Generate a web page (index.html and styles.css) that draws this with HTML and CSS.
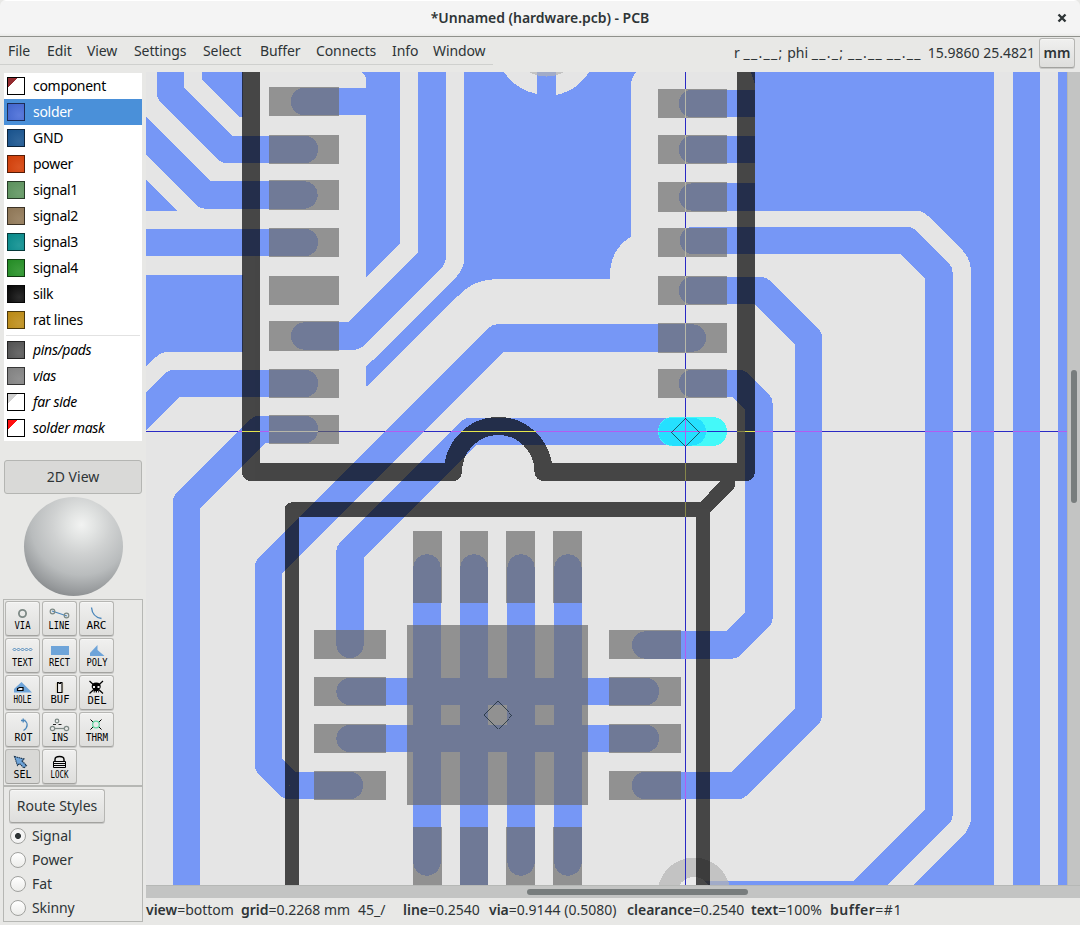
FILE: index.html
```html
<!DOCTYPE html>
<html lang="en">
<head>
<meta charset="utf-8">
<title>*Unnamed (hardware.pcb) - PCB</title>
<link rel="stylesheet" href="styles.css">
</head>
<body>
<div class="window">
<header class="titlebar"><h1>*Unnamed (hardware.pcb) - PCB</h1>
<svg class="close" width="10" height="10" viewBox="0 0 10 10"><path d="M1.5 1.5L8.5 8.5M8.5 1.5L1.5 8.5"/></svg></header>
<div class="topbar">
<nav class="menu"><span>File</span><span>Edit</span><span>View</span><span>Settings</span><span>Select</span><span>Buffer</span><span>Connects</span><span>Info</span><span>Window</span></nav>
<div class="coords"><span class="rel">r <i>__.__;</i> phi <i>__._;</i> <i>__.__</i> <i>__.__</i></span><span class="abs">15.9860 25.4821</span><button class="btn unit">mm</button></div>
</div>
<div class="main">
<aside class="side">
<ul class="layers">
<li><i class="sw half maroon"></i>component</li>
<li class="sel"><i class="sw c-solder"></i>solder</li>
<li><i class="sw c-gnd"></i>GND</li>
<li><i class="sw c-power"></i>power</li>
<li><i class="sw c-s1"></i>signal1</li>
<li><i class="sw c-s2"></i>signal2</li>
<li><i class="sw c-s3"></i>signal3</li>
<li><i class="sw c-s4"></i>signal4</li>
<li><i class="sw c-silk"></i>silk</li>
<li><i class="sw c-rat"></i>rat lines</li>
<li class="sep"></li>
<li class="it"><i class="sw c-pins"></i>pins/pads</li>
<li class="it"><i class="sw c-vias"></i>vias</li>
<li class="it"><i class="sw half grey"></i>far side</li>
<li class="it"><i class="sw half red"></i>solder mask</li>
</ul>
<button class="btn view2d">2D View</button>
<div class="ball"></div>
<div class="tools">
<button class="btn"><svg viewBox="0 0 33 33"><circle cx="16.5" cy="11.5" r="3.6" fill="none" stroke="#7d8985" stroke-width="1.8"/><text x="8.500" y="26.500" textLength="16" lengthAdjust="spacingAndGlyphs">VIA</text></svg></button>
<button class="btn"><svg viewBox="0 0 33 33"><path d="M9 9L24 14" stroke="#4a86bb" stroke-width="1.3"/><g fill="none" stroke="#7d8985" stroke-width="1.2"><circle cx="9.500" cy="9.500" r="2.300"/><circle cx="23.500" cy="13.500" r="2.300"/></g><text x="5.500" y="26.500" textLength="21" lengthAdjust="spacingAndGlyphs">LINE</text></svg></button>
<button class="btn"><svg viewBox="0 0 33 33"><path d="M11.500 5.500C12 11 15 15.500 21.500 16.500" fill="none" stroke="#4a86bb" stroke-width="1.3"/><text x="6.500" y="26.500" textLength="20" lengthAdjust="spacingAndGlyphs">ARC</text></svg></button>
<button class="btn"><svg viewBox="0 0 33 33"><g fill="none" stroke="#4a86bb"><path d="M7 10.500l1.500-1.500 1.500 1.500-1.500 1.500zM11 10.500l1.500-1.500 1.500 1.500-1.500 1.500zM15 10.500l1.500-1.500 1.500 1.500-1.500 1.500zM19 10.500l1.500-1.500 1.500 1.500-1.500 1.500zM23 10.500l1.500-1.500 1.500 1.500-1.500 1.500z" stroke-width="1"/></g><text x="6" y="26.500" textLength="21" lengthAdjust="spacingAndGlyphs">TEXT</text></svg></button>
<button class="btn"><svg viewBox="0 0 33 33"><path d="M8 7h18v9H8z" fill="#6ea4d9"/><text x="6" y="26.500" textLength="21" lengthAdjust="spacingAndGlyphs">RECT</text></svg></button>
<button class="btn"><svg viewBox="0 0 33 33"><path d="M17.500 6v5l7 6H10v-3z" fill="#6ea4d9"/><text x="6.500" y="26.500" textLength="21" lengthAdjust="spacingAndGlyphs">POLY</text></svg></button>
<button class="btn"><svg viewBox="0 0 33 33"><path d="M15.500 6L26 16.500H8V13z" fill="#6ea4d9"/><path d="M13.500 11.500h3.500v3h-5.500v-2z" fill="#eee" stroke="#000" stroke-width="1.200"/><text x="7.500" y="26.500" textLength="18" lengthAdjust="spacingAndGlyphs">HOLE</text></svg></button>
<button class="btn"><svg viewBox="0 0 33 33"><path d="M12.500 8h8M12.500 10h8M12.500 12h8M12.500 14h8M12.500 16h8" stroke="#d8c9a4" stroke-width="1"/><path d="M14.500 6.500h1.500v1h1.500v-1h1.500v10h-4.500z" fill="#eee" stroke="#000" stroke-width="1.100"/><text x="7.500" y="26.500" textLength="19" lengthAdjust="spacingAndGlyphs">BUF</text></svg></button>
<button class="btn"><svg viewBox="0 0 33 33"><path d="M9.500 5L23 17.500M23 5L9.500 17.500" stroke="#000" stroke-width="1.200"/><path d="M16.200 6.500c3 0 4.500 1.500 4.500 4 0 2-1 2.500-2 3v3h-5v-3c-1-.5-2-1-2-3 0-2.500 1.500-4 4.500-4z"/><path d="M13 10h2v2h-2zM17.500 10h2v2h-2zM14.700 15h1v2h-1zM17 15h1v2h-1z" fill="#eee"/><text x="7.500" y="27.500" textLength="19" lengthAdjust="spacingAndGlyphs">DEL</text></svg></button>
<button class="btn"><svg viewBox="0 0 33 33"><path d="M18 7c4 2.500 4.500 7.500-.5 10.500M15 7.500h4.500M17.200 5.500v4" fill="none" stroke="#4a86bb" stroke-width="1.300"/><text x="8.500" y="27.500" textLength="18" lengthAdjust="spacingAndGlyphs">ROT</text></svg></button>
<button class="btn"><svg viewBox="0 0 33 33"><g fill="none" stroke="#7d8985" stroke-width="1.200"><circle cx="14" cy="8" r="1.800"/><circle cx="9.500" cy="15.500" r="2.200"/><circle cx="23.500" cy="15.500" r="2.200"/><path d="M12 15.500h9"/></g><path d="M10 11.500h3M15.500 11.500h3" stroke="#222"/><text x="8.500" y="27.500" textLength="17" lengthAdjust="spacingAndGlyphs">INS</text></svg></button>
<button class="btn"><svg viewBox="0 0 33 33"><path d="M10.500 6.500l3 3M21.500 6.500l-3 3M10.500 16.500l3-3M21.500 16.500l-3-3" stroke="#000"/><circle cx="16" cy="11.500" r="3.300" fill="none" stroke="#64d6a3" stroke-width="1.300"/><text x="6" y="27.500" textLength="22" lengthAdjust="spacingAndGlyphs">THRM</text></svg></button>
<button class="btn on"><svg viewBox="0 0 33 33"><path d="M8.500 6.500l9.500 2.500-2 2 4.500 4.500-2.500 2.500-4.500-4.500-2 2z" fill="#6ea4d9" stroke="#1b3550" stroke-width="1.100" stroke-dasharray="1.500 .6"/><text x="7.500" y="27.500" textLength="18" lengthAdjust="spacingAndGlyphs">SEL</text></svg></button>
<button class="btn"><svg viewBox="0 0 33 33"><path d="M12 12V9.500c0-4 9-4 9 0V12" fill="none" stroke="#000" stroke-width="1.400"/><path d="M10.500 11.500h12v6h-12zM10.500 13.500h12M10.500 15.500h12" fill="#eee" stroke="#000" stroke-width="1"/><text x="7.500" y="27.500" textLength="18" lengthAdjust="spacingAndGlyphs">LOCK</text></svg></button>
</div>
<div class="routes">
<button class="btn rs">Route Styles</button>
<label><i class="radio on"></i>Signal</label>
<label><i class="radio"></i>Power</label>
<label><i class="radio"></i>Fat</label>
<label><i class="radio"></i>Skinny</label>
</div>
</aside>
<section class="work">
<div class="row">
<svg class="board" viewBox="146 72 921 813">
<g class="copper">
<path d="M202 72H243V117H239L202 80zM146 180L177 211H146zM146 275H243V352H168Q161 352 156 357L146 366z"/>
<path d="M362 72H400V243L366 277V80Q366 76 362 72z"/>
<path d="M464 72H504A51 51 0 0 0 537 94V72H556V95A51 51 0 0 0 589 72H636Q631 78 630.500 88V124Q632 170 630.500 210V237Q609 250 610 279H495C478 280 466 286 455 299L366 387V366Q370 363 373 360L457 276Q464 268 464 260z"/>
<path d="M751 72H994V885H913L966 832Q971 824 971 818V270Q970 258 963 251L928 216Q922 211 918 211H755V84z"/>
<path d="M1013 72H1040V885H1013zM1058 72H1067V885H1058zM697 881H870V885H697z"/>
</g>
<g class="trace">
<path d="M170.500 60V93L227 149.500H304.500M120 109.500L205.500 195H304M130 242.500H304.500M130 427.500L174 383.500H304.500M304.500 429.500H259.500L186.500 502.500V900"/>
<path d="M366 101.500H304.500M304.500 336H354L432 258V60"/>
<path d="M770 103.500H692.500M770 149.500H692.500M770 197H692.500M693.500 240.500H906.500L939 273V814.500L860 893.500"/>
<path d="M692.500 290.500H760.500L808.500 338.500V714.500L737.500 785.500H645.500M692.500 338H498L268.500 567.500V764.500L289.500 785.500H349.500M692.500 383.500H738.500L759 404V617.500L731.500 645H645.500M693 431.500H470.500L350 552V644.500"/>
<path d="M427 568V862M474 568V910M521 568V862M568 568V862M350 691.500H645.500M350 738.500H645.500"/>
</g>
<g class="pads">
<path d="M269 87h70v29h-70zM269 135h70v29h-70zM269 180h70v30h-70zM269 228h70v29h-70zM269 276h70v29h-70zM269 321h70v30h-70zM269 369h70v29h-70zM269 415h70v29h-70z"/>
<path d="M658 89h69v29h-69zM658 135h69v29h-69zM658 182h69v30h-69zM658 228h69v29h-69zM658 276h69v29h-69zM658 323h69v30h-69zM658 369h69v29h-69z"/>
<path d="M413 531h29v72h-29zM460 531h28v72h-28zM506 531h29v72h-29zM553 531h29v72h-29zM413 827h29v60h-29zM460 827h28v60h-28zM506 827h29v60h-29zM553 827h29v60h-29z"/>
<path d="M314 630h72v29h-72zM314 677h72v29h-72zM314 724h72v29h-72zM314 771h72v29h-72zM609 630h72v29h-72zM609 677h72v29h-72zM609 724h72v29h-72zM609 771h72v29h-72zM407 625h181v180h-181z"/>
</g>
<g class="via"><circle cx="546.500" cy="39.500" r="37"/><circle cx="694" cy="894" r="36.500"/></g>
<circle cx="694" cy="894" r="17" fill="#ebebeb"/>
<rect x="658" y="417" width="69" height="29" rx="14.500" fill="#44f9f9"/>
<path d="M672.500 417.500H692a14 14 0 0 1 0 28H672.500a14 14 0 0 1 0-28z" fill="#25e0ff"/>
<g class="silk">
<path d="M251 60V472H453A45.250 46 0 0 1 543.500 472H746V60" stroke-width="18"/>
<path d="M292 900V509.500H703V900M703 509.500L728 484" stroke-width="14.500"/>
</g>
<g class="cross">
<path class="base" d="M146 431.500H1067M685.500 72V885"/>
<path class="cu" d="M238 431.500H242M260 431.500H269M385 431.500H424M451 431.500H462M536 431.500H727M755 431.500H773M795 431.500H822M925 431.500H953M971 431.500H994M1013 431.500H1040M1058 431.500H1067M685.500 417V446M685.500 631V659M685.500 772V799"/>
<path class="base" d="M707 431.500H727"/>
<path class="sc" d="M242 431.500H260M461 431.500H536M745 431.500H755"/>
<path class="s" d="M737 431.500H745M685.500 463V481M685.500 502V517"/>
<path class="p" d="M269 431.500H318M685.500 89V118M685.500 135V164M685.500 182V212M685.500 228V257M685.500 276V305M685.500 323V353M685.500 369V398"/>
<path class="pn" d="M318 431.500H339"/>
</g>
<g class="mark"><path d="M685.500 417.500L699.500 431.500L685.500 445.500L671.500 431.500zM497.500 701L511.500 715L497.500 729L483.500 715z"/></g>
</svg>
<div class="vscroll"><i></i></div>
</div>
<div class="hscroll"><i></i></div>
<footer class="status"><span><b>view</b>=bottom</span><span><b>grid</b>=0.2268 mm</span><span>45_/</span><span><b>line</b>=0.2540</span><span><b>via</b>=0.9144 (0.5080)</span><span><b>clearance</b>=0.2540</span><span><b>text</b>=100%</span><span class="buf"><b>buffer</b>=#1</span></footer>
</section>
</div>
</div>
</body>
</html>
```
FILE: styles.css
```css
* { box-sizing: border-box; }
body { margin: 0; background: #e8e8e6; font: 14px/20px "Noto Sans", "Open Sans", sans-serif; color: #2e3436; }
.window { width: 1080px; height: 925px; display: flex; flex-direction: column; overflow: hidden; }
.titlebar { height: 37px; flex: none; display: flex; align-items: center; justify-content: center; position: relative; background: linear-gradient(#fff 0 1px, #f4f4f4 1px 33px, #e9e9e7); border-bottom: 1px solid #8f918c; border-radius: 6px 6px 0 0; }
.titlebar h1 { margin: 0; font-size: 14px; font-weight: 600; line-height: 20px; letter-spacing: -.04px; }
.close { position: absolute; right: 13px; top: 13px; }
.close path { stroke: #2e3436; stroke-width: 2.4; }
.topbar { height: 35px; flex: none; display: flex; justify-content: space-between; }
.menu { height: 28px; width: 493px; padding: 4px 0 0 8px; display: grid; grid-template-columns: 23px 24px 31px 53px 41px 40px 60px 25px 52px; gap: 16px; border-bottom: 1px solid #cfd0ce; white-space: nowrap; letter-spacing: -.1px; }
.coords { display: flex; align-items: flex-start; padding: 1px 5px 0 0; white-space: pre; }
.coords span { padding-top: 5px; }
.rel { margin-right: 6px; }
.rel i { font-style: normal; letter-spacing: 1.290px; }
.abs { margin-right: 4px; }
.btn { display: block; padding: 0; margin: 0; font: inherit; color: #2e3436; border: 1px solid #b6b6b3; border-bottom-color: #a2a29f; border-radius: 3px; background: linear-gradient(#f0f0ef, #dededc); box-shadow: inset 0 1px #f7f7f6, 0 1px #c9c9c7; }
.unit { width: 36px; height: 30px; font-weight: 600; }
.main { flex: 1; display: flex; min-height: 0; }
.side { width: 146px; padding: 1px 3px 0; display: flex; flex-direction: column; }
.layers { list-style: none; margin: 0 0 0 1px; padding: 0; width: 138px; background: #fff; color: #000; letter-spacing: -.3px; }
.layers li { height: 26px; display: flex; align-items: center; gap: 8px; padding-left: 3px; white-space: nowrap; }
.layers li.sep { height: 4px; background: linear-gradient(#e2e2e2, #e2e2e2) 2px 2px / 134px 1px no-repeat; }
.layers .sel { background: #4a90d9; color: #fff; }
.layers .it { font-style: italic; }
.sw { width: 18px; height: 18px; flex: none; border: 1px solid #00000099; }
.half { border-color: #000; }
.maroon { background: linear-gradient(135deg, #942c30 29%, #fff 29%); }
.grey { background: linear-gradient(135deg, #d0d0d0 29%, #fff 29%); }
.red { background: linear-gradient(135deg, #f11 29%, #fff 29%); }
.c-solder { background: radial-gradient(circle at 70% 70%, #5c7cdc, #4064cc); }
.c-gnd { background: radial-gradient(circle at 70% 70%, #31669b, #18528c); }
.c-power { background: radial-gradient(circle at 70% 70%, #da5422, #cf3d08); }
.c-s1 { background: radial-gradient(circle at 70% 70%, #70a070, #5b905c); }
.c-s2 { background: radial-gradient(circle at 70% 70%, #9d8769, #8d7555); }
.c-s3 { background: radial-gradient(circle at 70% 70%, #259b9b, #078889); }
.c-s4 { background: radial-gradient(circle at 70% 70%, #3d9d3d, #238b24); }
.c-silk { background: radial-gradient(circle at 70% 70%, #2b2b2b, #060606); }
.c-rat { background: radial-gradient(circle at 70% 70%, #c59a32, #b98813); }
.c-pins { background: radial-gradient(circle at 70% 70%, #6b6b6b, #505050); }
.c-vias { background: radial-gradient(circle at 70% 70%, #919191, #808080); }
.view2d { width: 138px; height: 34px; margin: 19px 0 0 1px; background: #d9d9d7; box-shadow: none; border-color: #b4b5b2; }
.ball { width: 99px; height: 99px; margin: 3px 0 3px 20.500px; flex: none; border-radius: 50%; background: radial-gradient(circle at 58% 28%, #f2f3f2 0, #e2e4e3 15%, #cfd1d1 32%, #b9bcbd 55%, #96999b 74%, #75787a 90%); }
.tools { width: 140px; height: 187px; flex: none; border: 1px solid #b6b7b4; display: grid; grid-template-columns: repeat(3, 35px); grid-auto-rows: 35px; gap: 2px; padding: 1px; }
.tools svg { display: block; width: 33px; height: 33px; }
.tools text { font: 11px "DejaVu Sans Mono", monospace; fill: #000; }
.btn.on { background: #d8d8d6; box-shadow: none; }
.routes { width: 140px; height: 136px; flex: none; border: 1px solid #b6b7b4; padding: 2px 5px; }
.rs { width: 96px; height: 34px; margin-bottom: 1px; }
.routes label { display: flex; align-items: center; height: 24px; gap: 6px; margin-left: 1px; letter-spacing: -.1px; }
.radio { width: 16px; height: 16px; border: 1px solid #a0a19e; border-radius: 50%; background: linear-gradient(#fff, #ececea); }
.radio.on { background: radial-gradient(#2e3436 0 2.600px, #f4f4f4 3.400px); }
.work { width: 934px; display: flex; flex-direction: column; }
.row { display: flex; height: 813px; }
.board { display: block; width: 921px; height: 813px; background: #e5e5e5; shape-rendering: crispEdges; }
.copper { fill: #7697f6; }
.trace { fill: none; stroke: #7697f6; stroke-width: 27.300px; stroke-linecap: round; stroke-linejoin: round; }
.pads { fill: #6d6d6d; opacity: .694; }
.via { fill: #b4b4b4; opacity: .694; }
.silk { fill: none; stroke: #000; stroke-linecap: round; stroke-linejoin: round; opacity: .694; }
.cross path { fill: none; stroke-width: 1px; }
.cross .base { stroke: #2a2ac4; }
.cross .cu { stroke: #b35cf0; }
.cross .sc { stroke: #e6e64c; }
.cross .s { stroke: #86864a; }
.cross .p { stroke: #b8b8a8; }
.cross .pn { stroke: #50507c; }
.mark { fill: none; stroke: #10222c; stroke-width: .700px; }
.vscroll { width: 13px; background: #c3c4c3; border-left: 1px solid #b6b8b6; padding: 298px 0 0 3px; }
.vscroll i { display: block; width: 6px; height: 133px; border-radius: 3px; background: #787d7d; }
.hscroll { height: 13px; flex: none; background: #c3c4c3; border-top: 1px solid #b6b8b6; padding: 3px 0 0 381px; }
.hscroll i { display: block; width: 221px; height: 6px; border-radius: 3px; background: #787d7d; }
.status { display: grid; grid-template-columns: 95px 117px 45px 86px 138px 124px 79px auto; padding-top: 2px; white-space: nowrap; }
.status b { font-weight: 600; }
.buf { letter-spacing: .500px; }
```
